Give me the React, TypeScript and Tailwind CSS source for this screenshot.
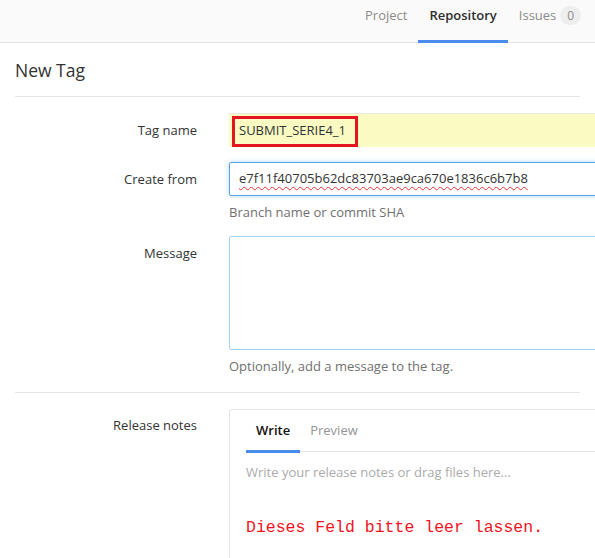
import React from "react";

const sans = { fontFamily: '"Open Sans", "Noto Sans", sans-serif' };

const NavTab: React.FC<{ label: string; active?: boolean; badge?: string }> = ({ label, active, badge }) => {
  return (
    <div
      className={`relative flex items-start pt-[6px] h-full px-[11px] text-[13px] leading-[18px] ${active ? "font-semibold text-[#2e2e2e]" : "text-[#8c8c8c]"}`}
    >
      {label}
      {badge && (
        <span className="ml-[4px] rounded-full bg-[#eeeeee] px-[7px] text-[12px] leading-[19px] text-[#8c8c8c]">
          {badge}
        </span>
      )}
      {active && <div className="absolute left-0 right-0 bottom-[-1px] h-[3px] bg-[#4a8bee]" />}
    </div>
  );
};

const FormRow: React.FC<{ label: string; children: React.ReactNode; top?: string }> = ({ label, children, top }) => {
  return (
    <div className="flex">
      <label className={`w-[182px] shrink-0 text-right text-[13px] text-[#333] ${top ?? "pt-[8px]"}`}>{label}</label>
      <div className="ml-[32px] w-[420px] shrink-0">{children}</div>
    </div>
  );
};

export default function App() {
  return (
    <div className="w-[595px] h-[558px] overflow-hidden bg-white" style={sans}>
      <nav className="h-[43px] bg-[#fafafa] border-b border-[#e5e5e5] flex pl-[354px]">
        <NavTab label="Project" />
        <NavTab label="Repository" active />
        <NavTab label="Issues" badge="0" />
      </nav>

      <div className="px-[15px]">
        <h3 className="h-[54px] border-b border-[#e5e5e5] flex items-center pt-[2px] text-[17.5px] font-medium text-[#333]">
          New Tag
        </h3>

        <div className="pt-[16px] flex flex-col">
          <FormRow label="Tag name">
            <div className="relative h-[34px] bg-[#f9fbc2] border-t border-[#e5e5e5] flex items-center px-[10px] text-[13px] text-[#333]">
              SUBMIT_SERIE4_1
              <div className="absolute left-[3px] top-[2px] w-[126px] h-[31px] border-[3px] border-[#e3161f]" />
            </div>
          </FormRow>

          <div className="h-[15px]" />
          <FormRow label="Create from">
            <div className="h-[34px] border border-[#5aa5e8] rounded-[2px] shadow-[0_0_4px_rgba(90,165,232,0.5)] flex items-center px-[9px] text-[13px] text-[#333]">
              <span className="underline decoration-wavy decoration-[#e33] decoration-1 underline-offset-[3px]">
                e7f11f40705b62dc83703ae9ca670e1836c6b7b8
              </span>
            </div>
            <p className="mt-[7px] text-[13px] leading-[18px] text-[#707070]">Branch name or commit SHA</p>
          </FormRow>

          <div className="h-[15px]" />
          <FormRow label="Message">
            <div className="h-[114px] border border-[#a6d2f7] rounded-[2px]" />
            <p className="mt-[7px] text-[13px] leading-[18px] text-[#707070]">Optionally, add a message to the tag.</p>
          </FormRow>
        </div>

        <div className="mt-[17px] border-t border-[#e5e5e5]" />

        <div className="pt-[16px]">
          <FormRow label="Release notes" top="pt-[7px]">
            <div className="border-l border-t border-[#e5e5e5] rounded-tl-[3px] h-[200px] px-[16px]">
              <div className="flex h-[42px] border-b border-[#e5e5e5] text-[13px]">
                <div className="relative flex items-center px-[10px] font-semibold text-[#111]">
                  Write
                  <div className="absolute left-0 right-0 bottom-[-2px] h-[3px] bg-[#4a8bee]" />
                </div>
                <div className="flex items-center px-[10px] text-[#959595]">Preview</div>
              </div>
              <p className="mt-[11px] text-[13px] leading-[18px] text-[#ababab]">
                Write your release notes or drag files here...
              </p>
              <p
                className="mt-[37px] text-[16.5px] leading-[20px] text-[#f2141e]"
                style={{ fontFamily: '"Liberation Mono", "DejaVu Sans Mono", monospace' }}
              >
                Dieses Feld bitte leer lassen.
              </p>
            </div>
          </FormRow>
        </div>
      </div>
    </div>
  );
}
